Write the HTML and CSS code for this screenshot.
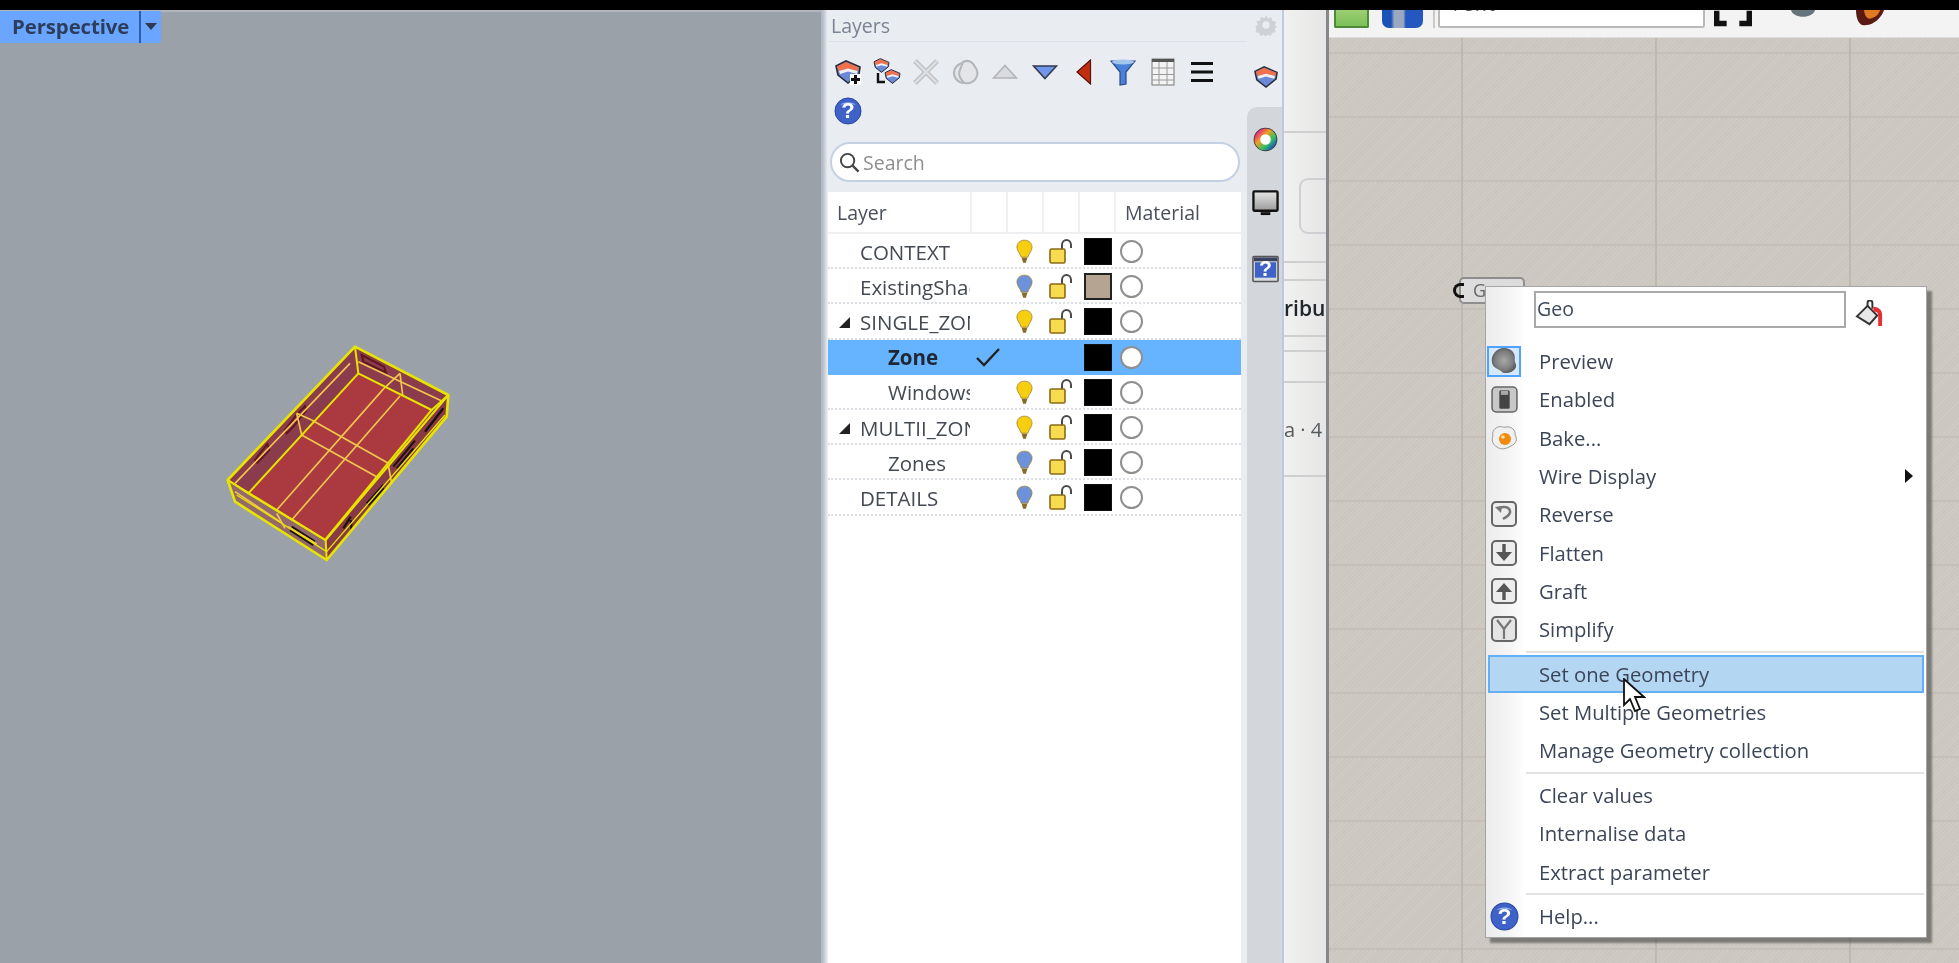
FILE: index.html
```html
<!DOCTYPE html>
<html lang="en">
<head>
<meta charset="utf-8">
<title>Rhino Layers and Grasshopper</title>
<link rel="stylesheet" href="styles.css">
</head>
<body>
<svg class="defs" width="0" height="0" aria-hidden="true">
  <defs>
    <symbol id="bulb" viewBox="0 0 18 26">
      <path d="M9 1C4 1 1 4.500 1 8.500c0 4 3.500 6 4.500 10.500h7C13.500 14.500 17 12.500 17 8.500 17 4.500 14 1 9 1z" fill="currentColor" stroke="#9a7a20" stroke-width=".8"/>
      <path d="M6 19.500h6L10.500 25h-3z" fill="#8a6a28"/>
    </symbol>
    <symbol id="lock" viewBox="0 0 24 26">
      <path d="M13 10V6c0-3 2-5 4.500-5S22 3 22 6v3" fill="none" stroke="#4a4a4a" stroke-width="2"/>
      <rect x="1" y="10" width="15" height="14" rx="1.500" fill="#f7dc50" stroke="#8a6a18" stroke-width="1.600"/>
    </symbol>
    <symbol id="shield" viewBox="0 0 26 24">
      <path d="M1 6 11 1 25 7 24 14 13 23 3 15z" fill="#6a8ad8" stroke="#2a2c38" stroke-width="1.600"/>
      <path d="M2 6.500 11 2 24 7.500 22.500 11 13 8.500 4 11z" fill="#f2704a"/>
      <path d="M4 11 13 8.500 22.500 11 22 14 13 11.500 5 14z" fill="#f4f0ee"/>
    </symbol>
    <symbol id="help" viewBox="0 0 28 28">
      <circle cx="14" cy="14" r="13" fill="#3f62c8" stroke="#2a46a0"/>
      <path d="M6 8a10 7 0 0 1 16 0 14 8 0 0 0-16 0z" fill="#9fb6ee"/>
      <text x="14" y="21" text-anchor="middle" class="help-mark">?</text>
    </symbol>
  </defs>
</svg>

<div class="page">
  <div class="topbar"></div>
  <div class="main">

    <section class="viewport">
      <div class="vp-tab">
        <span class="vp-name">Perspective</span>
        <span class="vp-caret"></span>
      </div>
      <svg class="model" viewBox="0 0 900 780" width="300" height="260">
        <path d="M525 80 805 225 800 290 440 720 165 545 143 480z" fill="#8b3c4c"/>
        <path d="M535 160 755 270 435 660 205 520z" fill="#ab3a40"/>
        <path d="M143 480 205 520 435 660 437 720 165 545z" fill="#93686c"/>
        <path d="M805 225 755 270 435 660 440 720 800 290z" fill="#873a46"/>
        <g fill="none">
          <path d="M545 105 612 140 618 158 550 125z" stroke="#5e1620" stroke-width="6"/>
          <path d="M225 420 262 372 268 390 232 428z" stroke="#5e1620" stroke-width="6"/>
          <path d="M315 330 350 285 375 258 378 272 340 320 320 340z" stroke="#5e1620" stroke-width="6"/>
          <path d="M335 620 405 665M330 630 400 675" stroke="#1c1010" stroke-width="7"/>
          <path d="M560 550 610 495M565 555 612 505" stroke="#1c1010" stroke-width="6"/>
          <path d="M490 625 512 590M515 630 512 600" stroke="#1c1010" stroke-width="7"/>
          <path d="M640 440 705 362M650 445 700 385" stroke="#1c1010" stroke-width="6"/>
          <path d="M735 335 790 265" stroke="#1c1010" stroke-width="7"/>
        </g>
        <g fill="none" stroke="#f3c64c" stroke-width="5">
          <path d="M612 205 290 570M660 228 335 600"/>
          <path d="M395 300 625 430M365 345 590 470"/>
          <path d="M165 515 300 605M325 620 410 672"/>
          <path d="M660 160 612 205M660 160 668 225M350 280 395 300M350 280 365 345M625 435 635 490M290 580 315 625"/>
          <path d="M535 125 790 245M165 490 510 130"/>
        </g>
        <g fill="none" stroke="#e8e400" stroke-width="8" stroke-linejoin="round">
          <path d="M525 80 805 225 800 290 440 720 165 545 143 480z"/>
          <path d="M143 480 437 660 805 225" stroke-width="6"/>
          <path d="M525 80 535 160 755 270 435 660 205 520 535 160" stroke-width="6"/>
          <path d="M143 480 205 520M437 660 440 720M805 225 755 270" stroke-width="6"/>
          <path d="M170 525 440 695 795 285" stroke-width="4"/>
        </g>
      </svg>
    </section>

    <section class="panel">
      <div class="panel-edge"></div>
      <div class="layers">
        <header class="layers-title">Layers</header>
        <div class="tools">
          <span class="tool"><svg viewBox="0 0 26 26" width="26" height="26"><use href="#shield"/><rect x="15" y="15" width="11" height="11" fill="#fff"/><path d="M20.500 16v9M16 20.500h9" stroke="#111" stroke-width="3"/></svg></span>
          <span class="tool"><svg viewBox="0 0 28 28" width="28" height="28"><svg x="0" y="0" width="17" height="15"><use href="#shield"/></svg><svg x="11" y="11" width="17" height="15"><use href="#shield"/></svg><path d="M5 15v9h7" fill="none" stroke="#111" stroke-width="2.400"/></svg></span>
          <span class="tool"><svg viewBox="0 0 26 26" width="26" height="26"><path d="M2 2l22 22M24 2 2 24" stroke="#bcbdbf" stroke-width="5"/><path d="M2 2l22 22M24 2 2 24" stroke="#dcdde0" stroke-width="2.500"/></svg></span>
          <span class="tool"><svg viewBox="0 0 28 28" width="28" height="28"><circle cx="12" cy="15" r="10" fill="#e4e5e8" stroke="#b4b6b9" stroke-width="2"/><path d="M11 4c6-3 10 1 12 5 2 2 3 5 2 9-2 6-8 8-12 7-5-3-7-9-5-13z" fill="#e4e5e8" stroke="#b4b6b9" stroke-width="2"/></svg></span>
          <span class="tool"><svg viewBox="0 0 26 16" width="26" height="16"><path d="M13 1.500 24.500 14h-23z" fill="#dadbdf" stroke="#b2b4b8" stroke-width="1.600"/></svg></span>
          <span class="tool"><svg viewBox="0 0 26 16" width="26" height="16"><path d="M13 14.500 24.500 2h-23z" fill="#7095ea" stroke="#333a50" stroke-width="1.600"/></svg></span>
          <span class="tool"><svg viewBox="0 0 18 26" width="18" height="26"><path d="M15.500 1 2 13l13.500 12z" fill="#c22c10" stroke="#5a1408" stroke-width="1.200"/></svg></span>
          <span class="tool"><svg viewBox="0 0 26 28" width="26" height="28"><path d="M1 3h24L16 14v12l-6 1V14z" fill="#4a80d8" stroke="#274a88" stroke-width="1.200"/><ellipse cx="13" cy="4" rx="11" ry="2.500" fill="#a4c6ee"/></svg></span>
          <span class="tool"><svg viewBox="0 0 24 28" width="24" height="28"><rect x="1" y="1" width="22" height="26" fill="#f3f3f3" stroke="#777"/><path d="M1 2.500h22" stroke="#555" stroke-width="3"/><path d="M8 4v23M16 4v23M1 10h22M1 16.500h22M1 22h22" stroke="#9a9a9a"/></svg></span>
          <span class="tool"><svg viewBox="0 0 24 24" width="24" height="24"><path d="M1 3.500h22M1 12h22M1 20.500h22" stroke="#111" stroke-width="3"/></svg></span>
          <span class="tool"><svg viewBox="0 0 28 28" width="28" height="28"><use href="#help"/></svg></span>
        </div>
        <div class="search">
          <svg viewBox="0 0 22 22" width="21" height="21"><circle cx="9" cy="9" r="7" fill="none" stroke="#444" stroke-width="2"/><path d="M14 14l6.500 6.500" stroke="#444" stroke-width="2.400"/></svg>
          <span class="search-text">Search</span>
        </div>
        <div class="table">
          <div class="row head">
            <span class="cell name">Layer</span>
            <span class="cell"></span><span class="cell"></span><span class="cell"></span><span class="cell"></span>
            <span class="cell mat">Material</span>
          </div>
          <div class="row">
            <span class="cell name l0"><span class="label">CONTEXT</span></span>
            <span class="cell"></span>
            <span class="cell ic"><svg class="bulb on"><use href="#bulb"/></svg></span>
            <span class="cell ic"><svg class="lock"><use href="#lock"/></svg></span>
            <span class="cell ic"><i class="swatch"></i></span>
            <span class="cell mat"><i class="mat-dot"></i></span>
          </div>
          <div class="row">
            <span class="cell name l0"><span class="label">ExistingShades</span></span>
            <span class="cell"></span>
            <span class="cell ic"><svg class="bulb off"><use href="#bulb"/></svg></span>
            <span class="cell ic"><svg class="lock"><use href="#lock"/></svg></span>
            <span class="cell ic"><i class="swatch tan"></i></span>
            <span class="cell mat"><i class="mat-dot"></i></span>
          </div>
          <div class="row">
            <span class="cell name l0"><i class="twist"></i><span class="label">SINGLE_ZONE</span></span>
            <span class="cell"></span>
            <span class="cell ic"><svg class="bulb on"><use href="#bulb"/></svg></span>
            <span class="cell ic"><svg class="lock"><use href="#lock"/></svg></span>
            <span class="cell ic"><i class="swatch"></i></span>
            <span class="cell mat"><i class="mat-dot"></i></span>
          </div>
          <div class="row current">
            <span class="cell name l1"><span class="label">Zone</span></span>
            <span class="cell ic"><svg width="26" height="22" viewBox="0 0 26 22"><path d="M2 12l7 7L24 3" fill="none" stroke="#222" stroke-width="2.400"/></svg></span>
            <span class="cell"></span>
            <span class="cell"></span>
            <span class="cell ic"><i class="swatch"></i></span>
            <span class="cell mat"><i class="mat-dot"></i></span>
          </div>
          <div class="row">
            <span class="cell name l1"><span class="label">Windows</span></span>
            <span class="cell"></span>
            <span class="cell ic"><svg class="bulb on"><use href="#bulb"/></svg></span>
            <span class="cell ic"><svg class="lock"><use href="#lock"/></svg></span>
            <span class="cell ic"><i class="swatch"></i></span>
            <span class="cell mat"><i class="mat-dot"></i></span>
          </div>
          <div class="row">
            <span class="cell name l0"><i class="twist"></i><span class="label">MULTII_ZONE</span></span>
            <span class="cell"></span>
            <span class="cell ic"><svg class="bulb on"><use href="#bulb"/></svg></span>
            <span class="cell ic"><svg class="lock"><use href="#lock"/></svg></span>
            <span class="cell ic"><i class="swatch"></i></span>
            <span class="cell mat"><i class="mat-dot"></i></span>
          </div>
          <div class="row">
            <span class="cell name l1"><span class="label">Zones</span></span>
            <span class="cell"></span>
            <span class="cell ic"><svg class="bulb off"><use href="#bulb"/></svg></span>
            <span class="cell ic"><svg class="lock"><use href="#lock"/></svg></span>
            <span class="cell ic"><i class="swatch"></i></span>
            <span class="cell mat"><i class="mat-dot"></i></span>
          </div>
          <div class="row">
            <span class="cell name l0"><span class="label">DETAILS</span></span>
            <span class="cell"></span>
            <span class="cell ic"><svg class="bulb off"><use href="#bulb"/></svg></span>
            <span class="cell ic"><svg class="lock"><use href="#lock"/></svg></span>
            <span class="cell ic"><i class="swatch"></i></span>
            <span class="cell mat"><i class="mat-dot"></i></span>
          </div>
        </div>
      </div>
      <aside class="side">
        <div class="side-top">
          <svg class="gear" viewBox="0 0 24 24" width="22" height="22"><path d="M12 1l2 4 4-1.500 1 4 4 1-1.500 4 2.500 1.500-2.500 2 1 4-4 .5-1 3.500-4-1.500-2 2.500-2-2.500-4 1.500-1-3.500-4-.5 1-4L.5 13.500 3 12 1.500 8l4-1 1-4 4 1.500z" fill="#cfd1d4"/><circle cx="12" cy="12" r="4" fill="#e9ecf1"/></svg>
          <svg class="side-shield" width="24" height="24"><use href="#shield"/></svg>
        </div>
        <div class="side-tabs">
          <svg viewBox="0 0 26 26" width="25" height="25"><defs><linearGradient id="wh" x1="0" y1="0" x2="1" y2="1"><stop offset="0" stop-color="#e0208a"/><stop offset=".35" stop-color="#f0a020"/><stop offset=".7" stop-color="#30c060"/><stop offset="1" stop-color="#2050c0"/></linearGradient></defs><circle cx="13" cy="13" r="12.300" fill="#333"/><circle cx="13" cy="13" r="8.500" fill="#fff" stroke="url(#wh)" stroke-width="6"/></svg>
          <svg viewBox="0 0 28 28" width="27" height="27"><defs><linearGradient id="scr" x1="0" y1="0" x2="0" y2="1"><stop offset="0" stop-color="#e6e6e6"/><stop offset="1" stop-color="#9a9a9a"/></linearGradient></defs><rect x="1.500" y="1.500" width="25" height="20" rx="1" fill="url(#scr)" stroke="#111" stroke-width="2.400"/><path d="M9 23h10v3H9z" fill="#111"/></svg>
          <svg viewBox="0 0 28 28" width="27" height="28"><rect x="1" y="1" width="26" height="26" rx="1" fill="#d8dbe0" stroke="#555" stroke-width="1.600"/><rect x="2" y="2" width="24" height="4" fill="#3a4260"/><rect x="3" y="7" width="22" height="16" fill="#3f62c8"/><text x="14" y="21" text-anchor="middle" class="help-mark">?</text></svg>
        </div>
      </aside>
      <div class="behind">
        <div class="slice s1"></div>
        <div class="slice s2"><span class="behind-box"></span></div>
        <div class="slice s3"></div>
        <div class="slice s4"><span class="behind-text strong">ribu</span></div>
        <div class="slice s5"></div>
        <div class="slice s6"></div>
        <div class="slice s7"><span class="behind-text">a · 4</span></div>
        <div class="slice s8"></div>
      </div>
    </section>

    <section class="gh">
      <div class="gh-toolbar">
        <span class="gh-green"></span>
        <span class="gh-blue"></span>
        <span class="gh-divider"></span>
        <span class="gh-input"><span class="gh-input-text">Text</span></span>
        <svg class="gh-brackets" viewBox="0 0 42 18" width="38" height="18"><path d="M3 0v14h11M39 0v14H28" fill="none" stroke="#111" stroke-width="6"/></svg>
        <svg class="gh-ball" viewBox="0 0 26 8" width="26" height="8"><path d="M1 0c2 9 22 9 24 0z" fill="#66757c"/></svg>
        <svg class="gh-fire" viewBox="0 0 32 18" width="32" height="18"><path d="M2 0c0 10 4 17 10 15 8 0 16-8 18-15z" fill="#5a1a12"/><path d="M10 0c1 8 5 10 8 8 4-1 7-4 8-8z" fill="#e07a20"/></svg>
      </div>
      <div class="canvas">
        <div class="param"><span class="param-nub"></span><span class="param-text">Geo</span></div>
      </div>

      <div class="menu">
        <div class="menu-head">
          <span class="menu-input">Geo</span>
          <svg class="bucket" viewBox="0 0 30 30" width="29" height="29"><path d="M2 17 13 6l10 10-8 9z" fill="#e8e8e8" stroke="#333" stroke-width="2"/><path d="M13 7V3a2.500 2.500 0 0 1 5 0v6" fill="none" stroke="#333" stroke-width="2"/><path d="M19 7c6 0 9 4 9 8v12h-4V16c0-3-2-4-5-4z" fill="#e43030"/></svg>
        </div>
        <ul class="items">
          <li class="item">
            <span class="item-icon boxed"><svg viewBox="0 0 26 26" width="28" height="28"><defs><radialGradient id="gb"><stop offset="0" stop-color="#a8a8a8"/><stop offset=".75" stop-color="#7c7c7c"/><stop offset="1" stop-color="#5e5e5e"/></radialGradient></defs><path d="M13 1c7 0 11 5 10 11 0 3 2 4 1 7-2 4-7 6-12 5-3-4-9-4-10-9C0 8 6 1 13 1z" fill="url(#gb)"/></svg></span>
            <span class="item-label">Preview</span>
          </li>
          <li class="item">
            <span class="item-icon"><svg viewBox="0 0 26 26" width="27" height="27"><rect x="1" y="1" width="24" height="24" rx="4" fill="#c8c8c8" stroke="#666" stroke-width="1.500"/><rect x="8" y="4" width="10" height="18" rx="1.500" fill="#444"/><rect x="9.500" y="4.500" width="7" height="4" fill="#aaa"/></svg></span>
            <span class="item-label">Enabled</span>
          </li>
          <li class="item">
            <span class="item-icon"><svg viewBox="0 0 28 28" width="28" height="28"><path d="M6 4c4-3 7 0 10-1 5-1 10 3 9 8 3 4 1 9-4 11-5 3-10 4-14 1-4-2-6-7-4-11-1-3 0-6 3-8z" fill="#f0f0f0" stroke="#999"/><circle cx="15" cy="15" r="6" fill="#f08a10"/><circle cx="13" cy="13" r="1.800" fill="#ffe0a0"/></svg></span>
            <span class="item-label">Bake...</span>
          </li>
          <li class="item">
            <span class="item-icon"></span>
            <span class="item-label">Wire Display</span>
            <i class="submenu"></i>
          </li>
          <li class="item">
            <span class="item-icon"><svg viewBox="0 0 26 26" width="26" height="26"><rect x="1" y="1" width="24" height="24" rx="4" fill="#ededed" stroke="#666" stroke-width="2"/><path d="M7 8c3-3 11-3 12 2 1 4-4 6-7 8" fill="none" stroke="#777" stroke-width="2.600"/><path d="M4 6l7-1-1 7z" fill="#777"/></svg></span>
            <span class="item-label">Reverse</span>
          </li>
          <li class="item">
            <span class="item-icon"><svg viewBox="0 0 26 26" width="26" height="26"><rect x="1" y="1" width="24" height="24" rx="4" fill="#ededed" stroke="#666" stroke-width="2"/><path d="M13 4v11" stroke="#555" stroke-width="3.400"/><path d="M5 12h16l-8 9z" fill="#555"/></svg></span>
            <span class="item-label">Flatten</span>
          </li>
          <li class="item">
            <span class="item-icon"><svg viewBox="0 0 26 26" width="26" height="26"><rect x="1" y="1" width="24" height="24" rx="4" fill="#ededed" stroke="#666" stroke-width="2"/><path d="M13 22V11" stroke="#555" stroke-width="3.400"/><path d="M5 14h16l-8-9z" fill="#555"/></svg></span>
            <span class="item-label">Graft</span>
          </li>
          <li class="item">
            <span class="item-icon"><svg viewBox="0 0 26 26" width="26" height="26"><rect x="1" y="1" width="24" height="24" rx="4" fill="#e4e4e4" stroke="#666" stroke-width="2"/><path d="M6 4l7 9 7-9M13 13v10" fill="none" stroke="#777" stroke-width="2.200"/></svg></span>
            <span class="item-label">Simplify</span>
          </li>
          <li class="sep"></li>
          <li class="item active"><span class="item-icon"></span><span class="item-label">Set one Geometry</span></li>
          <li class="item"><span class="item-icon"></span><span class="item-label">Set Multiple Geometries</span></li>
          <li class="item"><span class="item-icon"></span><span class="item-label">Manage Geometry collection</span></li>
          <li class="sep"></li>
          <li class="item"><span class="item-icon"></span><span class="item-label">Clear values</span></li>
          <li class="item"><span class="item-icon"></span><span class="item-label">Internalise data</span></li>
          <li class="item"><span class="item-icon"></span><span class="item-label">Extract parameter</span></li>
          <li class="sep"></li>
          <li class="item">
            <span class="item-icon"><svg width="29" height="29"><use href="#help"/></svg></span>
            <span class="item-label">Help...</span>
          </li>
        </ul>
      </div>
      <svg class="cursor" viewBox="0 0 24 36" width="24" height="36"><path d="M2 1v26l6-6 5 12 5-2-5-12h9z" fill="#fff" stroke="#111" stroke-width="1.800"/></svg>
    </section>
  </div>
</div>
</body>
</html>
```
FILE: styles.css
```css
* { box-sizing: border-box; }
html, body { margin: 0; padding: 0; background: #000; }
body { width: 1959px; height: 963px; overflow: hidden; font-family: "Open Sans", "Noto Sans", sans-serif; }
.defs { position: absolute; }
ul { list-style: none; margin: 0; padding: 0; }
.page { width: 1959px; height: 963px; display: flex; flex-direction: column; background: #000; filter: blur(.55px); }
.topbar { height: 10px; background: #000; flex: none; }
.main { flex: 1; display: flex; min-height: 0; }

.help-mark { font: 800 22px "Liberation Sans", sans-serif; fill: #fff; }

/* viewport */
.viewport { width: 821px; flex: none; position: relative; background: #9aa1a9; border-top: 2px solid #b2b6bb; }
.vp-tab { display: inline-flex; align-items: center; height: 32px; width: 161px; margin-top: -1px; background: #6aa6ff; border-radius: 0 0 3px 0; }
.vp-name { width: 141px; height: 100%; padding-left: 12px; line-height: 31px; font-size: 20.400px; font-weight: 700; color: #2c3e5c; border-right: 2px solid #2f5da8; letter-spacing: -.1px; white-space: nowrap; }
.vp-caret { margin-left: 4px; border: 6px solid transparent; border-top: 7px solid #2d3a50; border-bottom: 0; width: 0; height: 0; margin-top: -2px; }
.model { position: absolute; left: 180px; top: 308px; }

/* panel */
.panel { width: 508px; flex: none; display: flex; background: #e9ecf1; }
.panel-edge { width: 6px; flex: none; background: linear-gradient(90deg, #aeb4bf, #c2c8d2 50%, #e4e7ec); }
.layers { width: 421px; flex: none; display: flex; flex-direction: column; min-height: 0; }
.layers-title { height: 32px; margin-left: 1px; padding-left: 3px; font-size: 19.500px; line-height: 31px; color: #7a8494; border-bottom: 1px solid #dde0e6; flex: none; }
.tools { display: flex; flex-wrap: wrap; padding: 10px 0 0 1px; flex: none; height: 100px; align-content: flex-start; }
.tool { width: 39.400px; height: 39px; display: flex; align-items: center; justify-content: center; }
.search { margin-left: 3px; width: 410px; height: 40px; border-radius: 20px; background: #fff; border: 2px solid #c5d1e2; display: flex; align-items: center; padding-left: 7px; gap: 3px; flex: none; }
.search-text { font-size: 19.500px; color: #8f8f8f; }
.table { margin: 10px 0 0 1px; width: 413px; flex: 1; background: #fff; }
.row { display: grid; grid-template-columns: 142px 36px 36px 36px 36px 1fr; height: 35.200px; padding-top: 2px; border-bottom: 2px dotted #dcdfe3; align-items: stretch; }
.row.head { height: 42px; padding-top: 0; border-bottom: 2px solid #eeeff1; background: #fff; }
.row.head .cell { display: block; border-left: 2px solid #eef0f2; line-height: 41px; font-size: 19.500px; color: #4a4f5c; }
.row.head .cell:first-child { border-left: 0; padding-left: 9px; }
.row.head .mat { padding-left: 9px; }
.cell { min-width: 0; overflow: hidden; white-space: nowrap; display: flex; align-items: center; }
.cell.ic { justify-content: center; }
.cell.name { font-size: 20.500px; color: #444a52; }
.l0 { padding-left: 32px; position: relative; }
.l1 { padding-left: 60px; }
.twist { position: absolute; left: 11px; top: 11px; width: 0; height: 0; border-style: solid; border-width: 0 0 11px 11px; border-color: transparent transparent #222 transparent; }
.bulb { width: 17px; height: 25px; }
.bulb.on { color: #f8cf10; }
.bulb.off { color: #6c92dc; }
.lock { width: 24px; height: 26px; margin-left: 2px; }
.swatch { display: block; width: 28px; height: 27px; margin-left: 3px; background: #000; border: 1px solid #111; }
.swatch.tan { background: #b5a491; border: 2px solid #222; }
.cell.mat { padding-left: 6px; }
.mat-dot { display: block; width: 23px; height: 23px; border-radius: 50%; background: #fff; border: 2px solid #8f8f8f; }
.row.current { background: #66b3ff; border-bottom: 0; padding-top: 0; }
.row.current .cell.name { font-weight: 700; color: #1e2733; }

/* side tabs */
.side { width: 37px; flex: none; display: flex; flex-direction: column; background: #e9ecf1; border-right: 2px solid #bdcbe2; margin-left: -1px; }
.side-top { height: 97px; flex: none; display: flex; flex-direction: column; align-items: center; width: 37px; padding-top: 4px; gap: 29px; }
.side-tabs { flex: 1; background: #d3d6db; border-radius: 10px 0 0 0; display: flex; flex-direction: column; align-items: center; padding: 20px 0 0 2px; gap: 38px; }

/* window behind */
.behind { flex: 1; background: #ededeb; display: flex; flex-direction: column; overflow: hidden; min-width: 0; border-right: 3px solid #85878c; }
.slice { border-bottom: 2px solid #cfcfcf; background: linear-gradient(90deg, #f1f1f0, #e6e6e6); position: relative; flex: none; overflow: hidden; }
.s1 { height: 123px; }
.s2 { height: 130px; }
.s3 { height: 18px; }
.s4 { height: 56px; display: flex; align-items: center; }
.s5 { height: 15px; }
.s6 { height: 31px; }
.s7 { height: 94px; display: flex; align-items: center; }
.s8 { height: 486px; border-bottom: 0; }
.behind-box { position: absolute; left: 15px; top: 45px; width: 60px; height: 56px; border: 2px solid #cfd0d4; border-radius: 9px; }
.behind-text { font-size: 20px; color: #545b5b; white-space: nowrap; }
.behind-text.strong { font-weight: 600; color: #20262c; font-size: 21px; }

/* grasshopper */
.gh { flex: 1; min-width: 0; display: flex; flex-direction: column; position: relative; }
.gh-toolbar { height: 28px; flex: none; background: #f3f3f3; border-bottom: 1px solid #dedede; display: flex; align-items: flex-start; overflow: hidden; padding-left: 5px; }
.gh-green { width: 35px; height: 18px; background: linear-gradient(#9ccf70, #7cc05a); border: 2px solid #4f8a3a; border-top: 0; border-radius: 0 0 2px 2px; }
.gh-blue { width: 41px; height: 18px; margin-left: 13px; border-radius: 0 0 7px 7px; background: linear-gradient(90deg, #1a52b8 0 22%, #9aa8c0 30% 52%, #2458c0 58% 100%); }
.gh-divider { width: 2px; height: 18px; margin-left: 10px; background: #c9c9c9; }
.gh-input { width: 267px; height: 18px; margin-left: 3px; background: #fff; border: 2px solid #b9b9b9; border-top: 0; border-radius: 0 0 3px 3px; overflow: hidden; padding-left: 10px; }
.gh-input-text { display: block; margin-top: -18px; font-size: 19.500px; line-height: 24px; color: #555; letter-spacing: 2px; }
.gh-brackets { margin-left: 9px; }
.gh-ball { margin-left: 38px; }
.gh-fire { margin-left: 38px; }
.canvas { flex: 1; position: relative; background-color: #cdc9c2;
  background-image:
    linear-gradient(90deg, #bdb9b1 0 2px, transparent 2px),
    linear-gradient(#c4c0b9 0 2px, transparent 2px),
    repeating-linear-gradient(135deg, #cfccc5 0 1px, #cbc7c0 1px 3px);
  background-size: 194px 100%, 100% 64px, auto;
  background-position: 132px 0, 0 14px, 0 0; }
.param { position: absolute; left: 130px; top: 239px; width: 66px; height: 27px; background: #dcdcdc; border: 2px solid #8e8e8e; border-radius: 5px; font-size: 18px; color: #666; padding-left: 12px; line-height: 22px; }
.param-nub { position: absolute; left: -8px; top: 4px; width: 11px; height: 15px; border: 3px solid #111; border-right: 0; border-radius: 8px 0 0 8px; }

/* menu */
.menu { position: absolute; left: 156px; top: 276px; width: 442px; height: 652px; background: #fff linear-gradient(90deg, #ececec, #f6f6f6 26px, #fff 38px) no-repeat 0 0 / 39px 100%; border: 1px solid #a5a5a5; box-shadow: 5px 5px 2px rgba(70, 70, 70, .6); padding: 0 2px; }
.menu-head { height: 55px; display: flex; align-items: flex-start; padding: 4px 0 0 46px; }
.menu-input { width: 312px; height: 37px; background: #fff; border: 2px solid #a9a9a9; font-size: 19.500px; line-height: 32px; color: #3c4a5c; padding-left: 1px; }
.bucket { margin: 9px 0 0 9px; }
.items { display: flex; flex-direction: column; }
.item { display: flex; align-items: center; height: 38.300px; font-size: 20.250px; color: #3c4658; position: relative; border: 2px solid transparent; }
.item-icon { width: 34px; height: 34px; margin-left: -3px; display: flex; align-items: center; justify-content: center; flex: none; }
.item-icon.boxed { height: 31px; background: #d6e8fb; border: 2px solid #4da3ff; }
.item-label { margin-left: 18px; white-space: nowrap; }
.item.active { background: #b3d6f3; border-color: #63aef5; }
.sep { height: 2px; margin: 2.200px 0 2.200px 38px; background: #e2e2e2; }
.submenu { position: absolute; right: 9px; top: 10px; width: 0; height: 0; border-style: solid; border-width: 7px 0 7px 8px; border-color: transparent transparent transparent #111; }
.cursor { position: absolute; left: 293px; top: 668px; }
```
